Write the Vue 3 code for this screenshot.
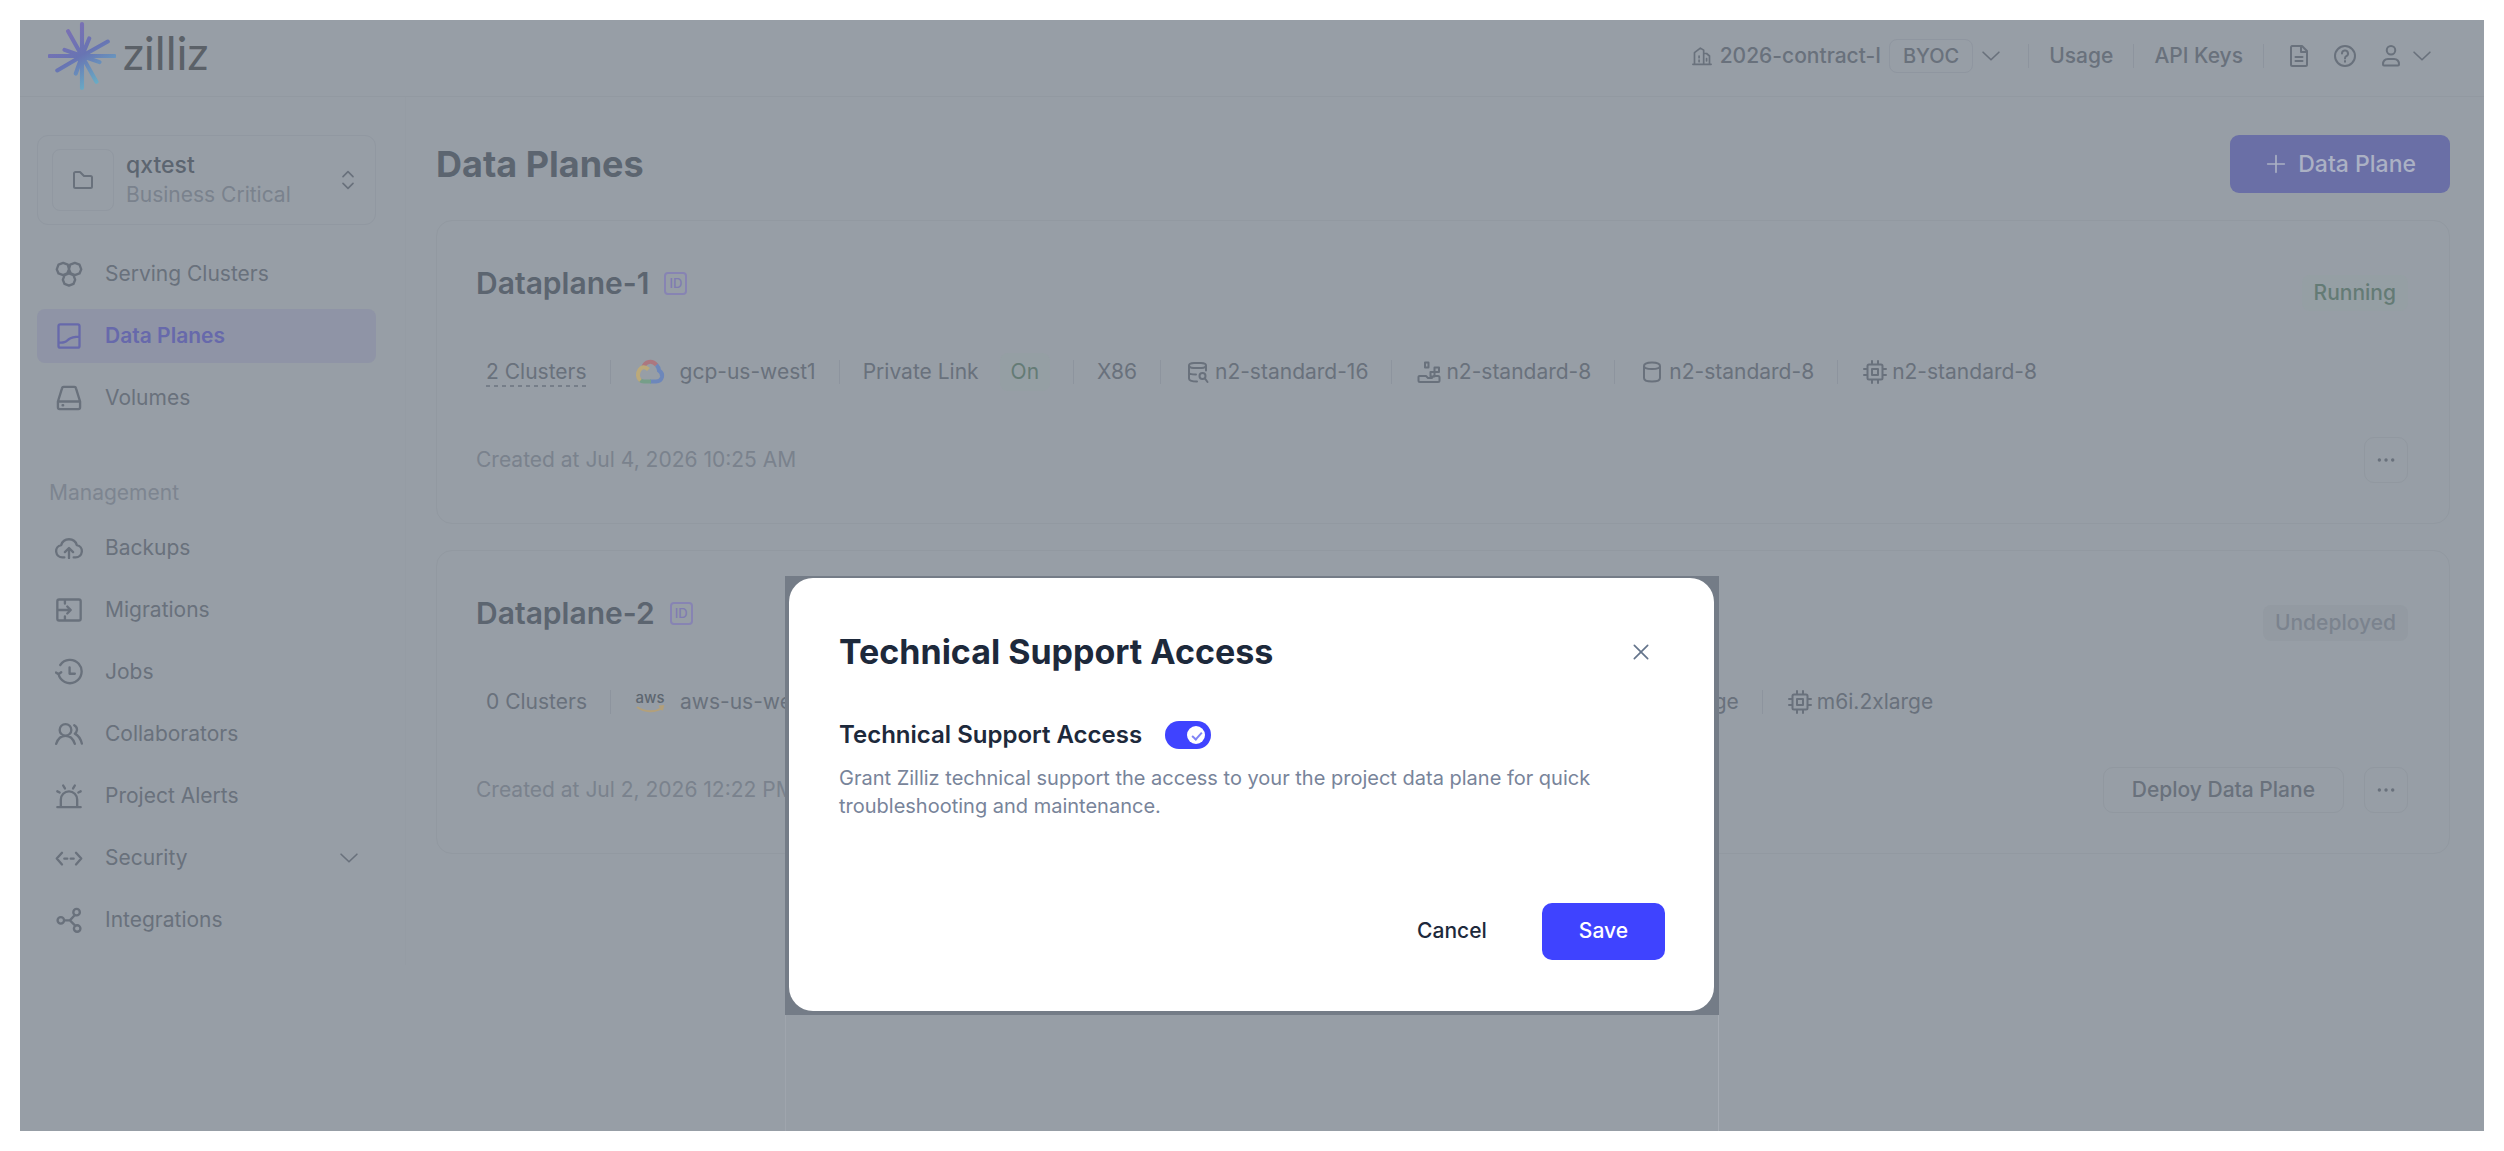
<script setup>
import { ref } from 'vue'

const supportAccess = ref(true)
const showDialog = ref(true)

const mainMenu = [
  { label: 'Serving Clusters', icon: 'clusters' },
  { label: 'Data Planes', icon: 'plane', active: true },
  { label: 'Volumes', icon: 'volume' },
]

const managementMenu = [
  { label: 'Backups', icon: 'backup' },
  { label: 'Migrations', icon: 'migration' },
  { label: 'Jobs', icon: 'jobs' },
  { label: 'Collaborators', icon: 'users' },
  { label: 'Project Alerts', icon: 'alert' },
  { label: 'Security', icon: 'security', expandable: true },
  { label: 'Integrations', icon: 'integration' },
]

const planes = [
  {
    name: 'Dataplane-1',
    status: 'Running',
    clusters: '2 Clusters',
    cloud: 'gcp',
    region: 'gcp-us-west1',
    privateLink: 'On',
    arch: 'X86',
    nodes: [
      { icon: 'search', type: 'n2-standard-16' },
      { icon: 'core', type: 'n2-standard-8' },
      { icon: 'database', type: 'n2-standard-8' },
      { icon: 'cpu', type: 'n2-standard-8' },
    ],
    created: 'Created at Jul 4, 2026 10:25 AM',
  },
  {
    name: 'Dataplane-2',
    status: 'Undeployed',
    clusters: '0 Clusters',
    cloud: 'aws',
    region: 'aws-us-west-2',
    privateLink: 'Off',
    arch: 'X86',
    nodes: [
      { icon: 'search', type: 'm6i.4xlarge' },
      { icon: 'core', type: 'm6i.2xlarge' },
      { icon: 'database', type: 'm6i.2xlarge' },
      { icon: 'cpu', type: 'm6i.2xlarge' },
    ],
    created: 'Created at Jul 2, 2026 12:22 PM',
  },
]

// 24 x 24 outline icons
const icons = {
  clusters:
    'M7 2.5l4 1.5 1 4-1.5 3.5L7 13l-4-1.5L1.5 8 3 4zM17 2.5l4 1.5 1.5 4-1.5 3.5L17 13l-3.5-1.5L12 8l1-4zM12 11.5l3.800 1.5 1.5 4-1.5 3.5L12 22l-3.800-1.5L6.700 17l1.5-4z',
  plane: 'M4.5 2h15a1.5 1.5 0 0 1 1.5 1.5v17a1.5 1.5 0 0 1-1.5 1.5h-15A1.5 1.5 0 0 1 3 20.5v-17A1.5 1.5 0 0 1 4.5 2zM3 17.5c5 .5 6-.5 8.5-2.5S16 12.5 21 12.5',
  volume: 'M7.5 2.5h9a1.5 1.5 0 0 1 1.5 1.200L21.5 15v5a1.5 1.5 0 0 1-1.5 1.5H4A1.5 1.5 0 0 1 2.5 20v-5L6 3.700a1.5 1.5 0 0 1 1.5-1.200zM3.5 15h17M6.5 18.200h.5',
  backup: 'M8 20H6.5A5.300 5.300 0 0 1 5.300 9.5a7 7 0 0 1 13.400 0A5.300 5.300 0 0 1 17.5 20H16M12 20.5v-8M8.5 15.5L12 12l3.5 3.5',
  migration: 'M3.5 3h17a1.5 1.5 0 0 1 1.5 1.5v15a1.5 1.5 0 0 1-1.5 1.5h-17A1.5 1.5 0 0 1 2 19.5v-15A1.5 1.5 0 0 1 3.5 3zM2 12h11M10.5 9l3 3-3 3M8.5 3v3.5M8.5 17.5V21',
  jobs: 'M4.5 6A10 10 0 1 1 3 13.5M.800 12.5L3 14l2.300-1.800M12.5 8v5.5H17',
  users: 'M9 3.5a5 5 0 1 1 0 10 5 5 0 0 1 0-10zM1 20.5c1.5-4.5 4-7 8-7s6.5 2.5 8 7M16.5 4.5c1.800 1 2.5 2.5 2.300 4.200-.2 1.5-1 2.5-1.800 3 3 1.5 5 4.5 6 8.5',
  alert: 'M2 21.5h20M5 21.5V15a7 7 0 0 1 14 0v6.5M2 8l2 1M7 3l1.5 2.5M17 3l-1.5 2.5M22 8l-2 1',
  security: 'M6 7.5L1.5 12.5 6 17.5M18 7.5l4.5 5-4.5 5M8 12.5h2.5M13.5 12.5H16',
  integration: 'M5 9.5a2.800 2.800 0 1 1 0 5.600 2.800 2.800 0 0 1 0-5.600zM18.5 2.5a2.800 2.800 0 1 1 0 5.600 2.800 2.800 0 0 1 0-5.600zM19 16.5a2.800 2.800 0 1 1 0 5.600 2.800 2.800 0 0 1 0-5.600zM7.800 12.300h5L17 7.700M12.800 12.300l4.700 4.700',
  search: 'M3 5.5C3 3.5 5.5 3 8 3h7c3 0 5 .5 5 2.5v5M3 5.5v13C3 20.5 6 21.5 11 21.5M3 5.5C3.5 8 6 8 11.5 8S19.5 8 20 5.5M3 12.5c0 1.5 2.5 2 7 2M16.5 13a3 3 0 1 1 0 6 3 3 0 0 1 0-6zM19 18.5l2.5 3.5',
  core: 'M4 16h5l2 2h4l1.5-2H21a1.5 1.5 0 0 1 1.5 1.5v3A1.5 1.5 0 0 1 21 22H3a1.5 1.5 0 0 1-1.5-1.5V17A1 1 0 0 1 2.5 16zM8 2.5h3.5v5H8zM13.5 12h4v4.5h-4zM17.5 7.5H22V12h-4.5z',
  database: 'M4 6c0-2.5 3-3.5 8-3.5s8 1 8 3.5-3 3-8 3-8-.5-8-3v12c0 2.5 3 3.5 8 3.5s8-1 8-3.5V6',
  cpu: 'M6 4.5h12A1.5 1.5 0 0 1 19.5 6v12a1.5 1.5 0 0 1-1.5 1.5H6A1.5 1.5 0 0 1 4.5 18V6A1.5 1.5 0 0 1 6 4.5zM9 9h6v6H9zM9 1v3.5M15 1v3.5M9 19.5V23M15 19.5V23M1 9h3.5M1 15h3.5M19.5 9H23M19.5 15H23',
  folder: 'M3 5.5A1.5 1.5 0 0 1 4.5 4H9l4 4h6.5A1.5 1.5 0 0 1 21 9.5v9a1.5 1.5 0 0 1-1.5 1.5h-15A1.5 1.5 0 0 1 3 18.5z',
  building: 'M1 22h22M3 22V8l7-5.5 4 2.5v17M14 9h3.5L21 12v10M8.5 12v2M8.5 17v2M17.5 15v3',
  doc: 'M5 2h10l5 5v13.5A1.5 1.5 0 0 1 18.5 22h-13A1.5 1.5 0 0 1 4 20.5v-17A1.5 1.5 0 0 1 5 2zM14 2.5V8h5M8.5 13h7M8.5 17h7',
  help: 'M12 2a10 10 0 1 1 0 20 10 10 0 0 1 0-20zM9 9.5a3 3 0 1 1 4.300 2.700c-.9.5-1.300 1-1.300 2.300M12 17v.8',
  user: 'M12 2a4 4 0 1 1 0 8.500 4 4 0 0 1 0-8.500zM5 21.500c-.6 0-1-.4-1-1 0-3.500 2-5.500 5-5.500h6c3 0 5 2 5 5.500 0 .6-.4 1-1 1z',
  down: 'M2.5 7.5l9.5 9 9.5-9',
  updown: 'M6 8l6-6 6 6M6 16l6 6 6-6',
  plus: 'M12 2v20M2 12h20',
  close: 'M4 4l16 16M20 4L4 20',
  more: 'M4 12h.1M12 12h.1M20 12h.1',
}
</script>

<template>
  <div class="page">
    <header class="topbar">
      <a class="brand" href="#">
        <svg class="brand-mark" viewBox="0 0 66 66" aria-hidden="true">
          <defs>
            <linearGradient id="rays" gradientUnits="userSpaceOnUse" x1="14" y1="4" x2="48" y2="62">
              <stop offset="0" stop-color="#7d70b4" />
              <stop offset="0.5" stop-color="#6874b3" />
              <stop offset="1" stop-color="#69b0c6" />
            </linearGradient>
          </defs>
          <path
            d="M33 2v62M1.5 33h63M19.5 9L33 33l14 25M9 47l24-14 25-14M16 27l17 6 17 6M40 16l-7 17-6 17"
            stroke="url(#rays)"
          />
        </svg>
        <span class="brand-name">zilliz</span>
      </a>
      <nav class="tools">
        <button class="org">
          <svg class="icon s20" viewBox="0 0 24 24"><path :d="icons.building" /></svg>
          <span>2026-contract-I</span>
          <span class="tag">BYOC</span>
          <svg class="icon s20" viewBox="0 0 24 24"><path :d="icons.down" /></svg>
        </button>
        <i class="bar"></i>
        <a href="#">Usage</a>
        <i class="bar"></i>
        <a href="#">API Keys</a>
        <i class="bar"></i>
        <div class="tool-icons">
          <button aria-label="Docs">
            <svg class="icon s24" viewBox="0 0 24 24"><path :d="icons.doc" /></svg>
          </button>
          <button aria-label="Help">
            <svg class="icon s24" viewBox="0 0 24 24"><path :d="icons.help" /></svg>
          </button>
          <button class="account" aria-label="Account">
            <svg class="icon s24" viewBox="0 0 24 24"><path :d="icons.user" /></svg>
            <svg class="icon s20" viewBox="0 0 24 24"><path :d="icons.down" /></svg>
          </button>
        </div>
      </nav>
    </header>

    <div class="body">
      <aside class="sidebar">
        <button class="project">
          <span class="project-icon">
            <svg class="icon s24" viewBox="0 0 24 24"><path :d="icons.folder" /></svg>
          </span>
          <span class="project-text">
            <span class="project-name">qxtest</span>
            <span class="project-plan">Business Critical</span>
          </span>
          <svg class="icon s20" viewBox="0 0 24 24"><path :d="icons.updown" /></svg>
        </button>

        <nav class="menu">
          <a
            v-for="item in mainMenu"
            :key="item.label"
            href="#"
            :class="['menu-item', { active: item.active }]"
          >
            <svg class="icon s28" viewBox="0 0 24 24"><path :d="icons[item.icon]" /></svg>
            <span>{{ item.label }}</span>
          </a>
        </nav>

        <h2 class="menu-title">Management</h2>
        <nav class="menu">
          <a v-for="item in managementMenu" :key="item.label" href="#" class="menu-item">
            <svg class="icon s28" viewBox="0 0 24 24"><path :d="icons[item.icon]" /></svg>
            <span>{{ item.label }}</span>
            <svg v-if="item.expandable" class="icon s20 expand" viewBox="0 0 24 24">
              <path :d="icons.down" />
            </svg>
          </a>
        </nav>
      </aside>

      <main class="content">
        <div class="content-head">
          <h1>Data Planes</h1>
          <button class="add-button">
            <svg class="icon s20" viewBox="0 0 24 24"><path :d="icons.plus" /></svg>
            <span>Data Plane</span>
          </button>
        </div>

        <section v-for="plane in planes" :key="plane.name" class="card">
          <div class="card-head">
            <h2>
              {{ plane.name }}
              <span class="id-badge">ID</span>
            </h2>
            <span :class="['status', plane.status.toLowerCase()]">{{ plane.status }}</span>
          </div>

          <div class="meta">
            <span :class="{ dotted: plane.cloud === 'gcp' }">{{ plane.clusters }}</span>
            <i class="bar"></i>
            <span class="region">
              <svg v-if="plane.cloud === 'gcp'" class="cloud" viewBox="0 0 28 28">
                <path d="M7 9.500C9 3.500 16 1.500 20.500 7" stroke="#ac777f" />
                <path d="M20.500 7c1.500 1.500 2.300 3.500 2.500 5.500 3 2 3.500 4 3 6.500-.8 3-3 4.500-6 4.500H14" stroke="#6d87bb" />
                <path d="M15 23.500H8c-1.800 0-3-.5-4-1.500" stroke="#769e89" />
                <path d="M4.500 22.500C1.500 20 1 15.500 3.500 12c2-3.500 6-3.500 9-.5" stroke="#bba97a" />
              </svg>
              <svg v-else class="cloud" viewBox="0 0 28 28">
                <text x="14" y="15" text-anchor="middle" class="aws-text">aws</text>
                <path class="aws-smile" d="M1 19c8 5.5 18 5.5 25 1M23 18.5l4-.3-1 4" />
              </svg>
              {{ plane.region }}
            </span>
            <i class="bar"></i>
            <span class="link">
              Private Link
              <span :class="['link-state', { off: plane.privateLink === 'Off' }]">{{ plane.privateLink }}</span>
            </span>
            <i class="bar"></i>
            <span>{{ plane.arch }}</span>
            <template v-for="node in plane.nodes" :key="node.icon">
              <i class="bar"></i>
              <span class="node">
                <svg class="icon s24" viewBox="0 0 24 24"><path :d="icons[node.icon]" /></svg>
                {{ node.type }}
              </span>
            </template>
          </div>

          <div class="card-foot">
            <span class="created">{{ plane.created }}</span>
            <div class="actions">
              <button v-if="plane.status === 'Undeployed'" class="deploy">Deploy Data Plane</button>
              <button class="more" aria-label="More">
                <svg class="icon s20" viewBox="0 0 24 24"><path :d="icons.more" /></svg>
              </button>
            </div>
          </div>
        </section>
      </main>
    </div>

    <div v-if="showDialog" class="overlay">
      <div class="dialog-wrap">
        <div class="dialog" role="dialog" aria-labelledby="dialog-title">
          <div class="dialog-head">
            <h2 id="dialog-title">Technical Support Access</h2>
            <button class="close" aria-label="Close" @click="showDialog = false">
              <svg class="icon s20" viewBox="0 0 24 24"><path :d="icons.close" /></svg>
            </button>
          </div>
          <div class="switch-row">
            <label for="support-access">Technical Support Access</label>
            <input id="support-access" v-model="supportAccess" class="switch" type="checkbox" role="switch" />
          </div>
          <p>
            Grant Zilliz technical support the access to your the project data plane for quick
            troubleshooting and maintenance.
          </p>
          <div class="dialog-foot">
            <button class="cancel" @click="showDialog = false">Cancel</button>
            <button class="save" @click="showDialog = false">Save</button>
          </div>
        </div>
      </div>
    </div>
  </div>
</template>

<style>
body {
  margin: 0;
  background: #ffffff;
}
</style>

<style scoped>
.page {
  position: relative;
  box-sizing: border-box;
  min-height: calc(100vh - 40px);
  margin: 20px;
  background: #979ea6;
  color: #69717c;
  font-family: Inter, 'Liberation Sans', sans-serif;
  font-size: 21px;
  line-height: 30px;
}

.page * {
  box-sizing: border-box;
}

a {
  color: inherit;
  text-decoration: none;
}

button {
  padding: 0;
  border: none;
  background: none;
  color: inherit;
  font: inherit;
  cursor: pointer;
}

h1,
h2,
p {
  margin: 0;
}

.icon {
  flex: none;
  fill: none;
  stroke: currentColor;
  stroke-width: 2;
  stroke-linecap: round;
  stroke-linejoin: round;
}

.s20 {
  width: 20px;
  height: 20px;
}

.s24 {
  width: 24px;
  height: 24px;
}

.s28 {
  width: 28px;
  height: 28px;
}

.bar {
  width: 1px;
  height: 24px;
  background: #8d949e;
}

/* top bar */
.topbar {
  display: flex;
  justify-content: space-between;
  align-items: center;
  height: 77px;
  padding: 0 52px 4px 28px;
  border-bottom: 1px solid #9299a1;
}

.brand {
  display: flex;
  align-items: center;
  gap: 7px;
  color: #5b6168;
  font-family: Lato, sans-serif;
  font-size: 46px;
  line-height: 60px;
}

.brand-name {
  padding-bottom: 6px;
}

.brand-mark {
  width: 68px;
  height: 68px;
  fill: none;
  stroke-width: 4;
  stroke-linecap: round;
}

.tools,
.org,
.tool-icons,
.account {
  display: flex;
  align-items: center;
}

.tools {
  gap: 20px;
  font-weight: 500;
}

.org {
  gap: 8px;
  margin-right: 7px;
}

.tag {
  height: 34px;
  padding: 0 13px;
  border: 1px solid #8f96a0;
  border-radius: 8px;
  font-size: 20px;
  line-height: 32px;
}

.tool-icons {
  gap: 22px;
  margin-left: 3px;
}

.tool-icons button {
  display: flex;
}

.tool-icons .account {
  gap: 9px;
}

/* sidebar */
.body {
  display: flex;
}

.sidebar {
  flex: none;
  width: 386px;
  padding: 38px 29px 18px 17px;
  border-right: 1px solid #959ca4;
}

.project {
  display: flex;
  align-items: center;
  width: 100%;
  height: 90px;
  margin-bottom: 22px;
  padding: 0 17px 0 14px;
  border: 1px solid #9198a1;
  border-radius: 11px;
  text-align: left;
}

.project-icon {
  display: flex;
  align-items: center;
  justify-content: center;
  width: 62px;
  height: 62px;
  margin-right: 12px;
  border: 1px solid #9198a1;
  border-radius: 8px;
}

.project-text {
  flex: 1;
  display: flex;
  flex-direction: column;
}

.project-name {
  color: #5c6570;
  font-size: 23px;
  font-weight: 500;
}

.project-plan {
  color: #7a828d;
}

.menu {
  display: flex;
  flex-direction: column;
  gap: 8px;
}

.menu-item {
  display: flex;
  align-items: center;
  gap: 22px;
  height: 54px;
  padding: 0 17px 0 18px;
  border-radius: 8px;
}

.menu-item.active {
  background: #8f94a6;
  color: #6769ab;
  font-weight: 600;
}

.expand {
  margin-left: auto;
}

.menu-title {
  margin: 52px 0 12px 12px;
  color: #7d8590;
  font-size: 21px;
  font-weight: 400;
  line-height: 32px;
}

/* content */
.content {
  flex: 1;
  min-width: 0;
  padding: 38px 34px 38px 30px;
}

.content-head {
  display: flex;
  justify-content: space-between;
  align-items: center;
  margin-bottom: 27px;
}

.content-head h1 {
  color: #5c6570;
  font-size: 36px;
  font-weight: 700;
  line-height: 58px;
}

.add-button {
  display: flex;
  align-items: center;
  gap: 12px;
  height: 58px;
  padding: 0 34px 0 36px;
  border-radius: 9px;
  background: #6a6fa6;
  color: #abb1c4;
  font-size: 23px;
  font-weight: 500;
}

.card {
  padding: 44px 41px 40px 39px;
  border: 1px solid #9299a1;
  border-radius: 16px;
}

.card + .card {
  margin-top: 26px;
}

.card-head {
  display: flex;
  justify-content: space-between;
  align-items: flex-start;
  height: 46px;
  margin-bottom: 42px;
}

.card-head h2 {
  display: flex;
  align-items: center;
  gap: 15px;
  color: #5c6570;
  font-size: 30px;
  font-weight: 600;
  line-height: 36px;
}

.id-badge {
  width: 23px;
  height: 23px;
  border: 2px solid #8784b3;
  border-radius: 4px;
  color: #7f7cb2;
  font-size: 13px;
  font-weight: 500;
  line-height: 19px;
  text-align: center;
}

.status {
  align-self: flex-end;
  height: 36px;
  padding: 0 12px;
  border-radius: 8px;
  font-weight: 500;
  line-height: 36px;
}

.running {
  background: #959fa4;
  color: #647b75;
}

.undeployed {
  background: #939aa2;
  color: #7b838e;
}

.meta {
  display: flex;
  align-items: center;
  gap: 23px;
  height: 38px;
  margin-bottom: 46px;
  padding-left: 10px;
  white-space: nowrap;
}

.dotted {
  background: repeating-linear-gradient(90deg, #767e89 0 4px, transparent 4px 8px) bottom / 100% 2px no-repeat;
}

.region,
.link,
.node {
  display: flex;
  align-items: center;
}

.region {
  gap: 16px;
}

.cloud {
  width: 28px;
  height: 28px;
  margin-left: 2px;
  overflow: visible;
  fill: none;
  stroke-width: 4;
}

.aws-text {
  fill: #5d6670;
  font-size: 15px;
  font-weight: 500;
}

.aws-smile {
  stroke: #b3a07a;
  stroke-width: 2;
}

.link {
  gap: 21px;
}

.link-state {
  height: 38px;
  padding: 0 11px;
  border-radius: 8px;
  background: #959fa4;
  color: #647b75;
  line-height: 38px;
}

.link-state.off {
  background: #939aa2;
  color: #7b838e;
}

.node {
  gap: 5px;
  margin-left: 2px;
}

.card-foot,
.actions {
  display: flex;
  align-items: center;
}

.card-foot {
  justify-content: space-between;
}

.created {
  color: #7a828d;
}

.actions {
  gap: 20px;
}

.deploy,
.more {
  height: 46px;
  border: 1px solid #9198a0;
  border-radius: 10px;
}

.deploy {
  padding: 0 28px;
  font-weight: 500;
}

.more {
  display: flex;
  align-items: center;
  justify-content: center;
  width: 44px;
}

.more .icon {
  stroke-width: 4;
}

/* dialog */
.overlay {
  position: absolute;
  top: 50%;
  right: 0;
  bottom: 0;
  left: 0;
  width: 934px;
  margin: 0 auto;
  border-right: 1px solid #a5abb3;
  border-left: 1px solid #9fa5ad;
}

.dialog-wrap {
  margin: 0 -1px;
  padding: 2px 5px 4px 4px;
  background: #747c87;
}

.dialog {
  padding: 48px 49px 51px 50px;
  border-radius: 24px;
  background: #ffffff;
  color: #1d293b;
}

.dialog-head,
.switch-row,
.dialog-foot {
  display: flex;
  align-items: center;
}

.dialog-head {
  justify-content: space-between;
  margin-bottom: 34px;
}

.dialog-head h2 {
  font-size: 34px;
  font-weight: 700;
  line-height: 52px;
}

.close {
  display: flex;
  margin-right: 14px;
  color: #64748b;
}

.switch-row {
  gap: 23px;
  margin-bottom: 6px;
  font-size: 24px;
  font-weight: 600;
  line-height: 46px;
}

.switch {
  position: relative;
  width: 46px;
  height: 28px;
  margin: 0;
  border-radius: 14px;
  background: #b5bcc8;
  appearance: none;
  cursor: pointer;
}

.switch:checked {
  background: #3f43ff;
}

.switch::before {
  content: '';
  position: absolute;
  top: 5px;
  left: 5px;
  width: 18px;
  height: 18px;
  border-radius: 50%;
  background: #ffffff;
}

.switch:checked::before {
  left: 22px;
}

.switch:checked::after {
  content: '';
  position: absolute;
  top: 9px;
  left: 29px;
  width: 4px;
  height: 8px;
  border: solid #8084f5;
  border-width: 0 2px 2px 0;
  transform: rotate(42deg);
}

.dialog p {
  margin-bottom: 83px;
  color: #78849a;
  font-size: 20px;
  line-height: 28px;
}

.dialog-foot {
  justify-content: flex-end;
  gap: 55px;
  font-weight: 500;
}

.save {
  height: 57px;
  padding: 0 37px;
  border-radius: 10px;
  background: #3f43ff;
  color: #ffffff;
}
</style>
